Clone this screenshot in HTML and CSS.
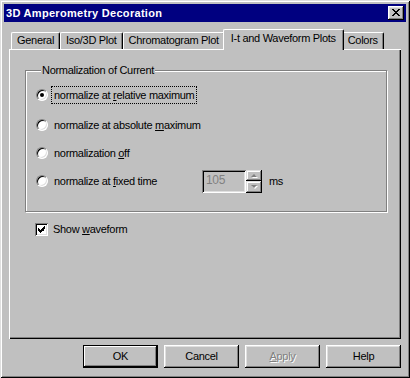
FILE: index.html
```html
<!DOCTYPE html>
<html lang="en">
<head>
    <meta charset="UTF-8">
    <title>3D Amperometry Decoration</title>
    <link rel="stylesheet" href="styles.css">
</head>
<body>
    <div class="window">
        <div class="titlebar">
            <span class="title">3D Amperometry Decoration</span>
            <span class="close-btn">
                <svg width="8" height="7" viewBox="0 0 8 7" shape-rendering="crispEdges">
                    <path d="M0 0h2v1h-2zM6 0h2v1h-2zM1 1h2v1h-2zM5 1h2v1h-2zM2 2h4v1h-4zM3 3h2v1h-2zM2 4h4v1h-4zM1 5h2v1h-2zM5 5h2v1h-2zM0 6h2v1h-2zM6 6h2v1h-2z" fill="#000"/>
                </svg>
            </span>
        </div>

        <div class="dialog-body">
            <div class="tabs">
                <div class="tab">General</div>
                <div class="tab">Iso/3D Plot</div>
                <div class="tab">Chromatogram Plot</div>
                <div class="tab active">I-t and Waveform Plots</div>
                <div class="tab">Colors</div>
            </div>

            <div class="panel">
                <fieldset class="group">
                    <legend>Normalization of Current</legend>
                    <div class="option">
                        <span class="radio checked"></span>
                        <span class="label focused">normalize at <u>r</u>elative maximum</span>
                    </div>
                    <div class="option">
                        <span class="radio"></span>
                        <span class="label">normalize at absolute <u>m</u>aximum</span>
                    </div>
                    <div class="option">
                        <span class="radio"></span>
                        <span class="label">normalization <u>o</u>ff</span>
                    </div>
                    <div class="option">
                        <span class="radio"></span>
                        <span class="label fixed-label">normalize at <u>f</u>ixed time</span>
                        <div class="spin-edit">
                            <div class="edit">105</div>
                            <div class="spinner">
                                <span class="spin-btn"><span class="arrow-up"></span></span>
                                <span class="spin-btn"><span class="arrow-down"></span></span>
                            </div>
                        </div>
                        <span class="unit">ms</span>
                    </div>
                </fieldset>

                <div class="check-row">
                    <span class="checkbox">
                        <svg width="7" height="7" viewBox="0 0 7 7" shape-rendering="crispEdges">
                            <path d="M6 0h1v3h-1zM5 1h1v4h-1zM4 2h1v3h-1zM0 2h1v3h-1zM1 3h1v3h-1zM3 3h1v3h-1zM2 4h1v3h-1z" fill="#000"/>
                        </svg>
                    </span>
                    <span class="label">Show <u>w</u>aveform</span>
                </div>
            </div>

            <div class="buttons">
                <div class="btn default">OK</div>
                <div class="btn">Cancel</div>
                <div class="btn disabled"><u>A</u>pply</div>
                <div class="btn">Help</div>
            </div>
        </div>
    </div>
</body>
</html>
```

FILE: styles.css
```css
body {
    margin: 0;
    background-color: #c0c0c0;
    font-family: "Liberation Sans", Arial, sans-serif;
    font-size: 11px;
    letter-spacing: -0.3px;
    color: #000;
}

/* Window frame */
.window {
    width: 410px;
    height: 378px;
    box-sizing: border-box;
    padding: 4px;
    background-color: #c0c0c0;
    box-shadow: inset 1px 1px #dfdfdf, inset -1px -1px #000,
                inset 2px 2px #fff, inset -2px -2px #808080;
    display: flex;
    flex-direction: column;
}

.titlebar {
    height: 18px;
    background-color: #000080;
    display: flex;
    align-items: center;
    justify-content: space-between;
    padding: 0 2px 0 2px;
}

.title {
    color: #fff;
    font-weight: bold;
    letter-spacing: 0.3px;
}

.close-btn {
    width: 16px;
    height: 14px;
    box-sizing: border-box;
    background-color: #c0c0c0;
    box-shadow: inset -1px -1px #000, inset 1px 1px #fff,
                inset -2px -2px #808080, inset 2px 2px #dfdfdf;
    display: flex;
    align-items: center;
    justify-content: center;
    padding: 0 1px 1px 0;
}

.close-btn svg {
    display: block;
}

.dialog-body {
    padding: 7px 5px 0 5px;
    display: flex;
    flex-direction: column;
}

/* Tabs */
.tabs {
    display: flex;
    align-items: flex-end;
    height: 20px;
    padding-left: 2px;
}

.tab {
    height: 16px;
    line-height: 15px;
    padding: 0 5px;
    border: 1px solid #fff;
    border-bottom: none;
    border-right-color: #000;
    border-radius: 2px 2px 0 0;
    box-shadow: inset -1px 0 #808080;
    white-space: nowrap;
}

.tab.active {
    height: 20px;
    line-height: 17px;
    margin: 0 -2px -1px -2px;
    padding: 0 7px;
    background-color: #c0c0c0;
    position: relative;
    z-index: 1;
}

/* Tab page */
.panel {
    height: 290px;
    box-sizing: border-box;
    padding: 15px 14px 0 16px;
    box-shadow: inset 1px 1px #fff, inset -1px -1px #000,
                inset -2px -2px #808080;
}

.group {
    margin: 0;
    padding: 4px 0 16px 10px;
    border: 1px solid #808080;
    box-shadow: inset 1px 1px #fff, 1px 1px #fff;
}

.group legend {
    padding: 0 1px;
    margin-left: 5px;
    background-color: #c0c0c0;
    line-height: 13px;
}

.option {
    display: flex;
    align-items: center;
    height: 28px;
}

.option:first-of-type {
    margin-bottom: 2px;
}

.radio {
    width: 12px;
    height: 12px;
    box-sizing: border-box;
    border-radius: 50%;
    background-color: #fff;
    border: 1px solid;
    border-color: #808080 #fff #fff #808080;
    box-shadow: inset 1px 1px #000, inset -1px -1px #dfdfdf;
    display: flex;
    align-items: center;
    justify-content: center;
    margin-right: 5px;
    flex-shrink: 0;
}

.radio.checked::after {
    content: "";
    width: 4px;
    height: 4px;
    border-radius: 50%;
    background-color: #000;
}

.label {
    line-height: 14px;
    padding: 0 1px;
}

.label.focused {
    outline: 1px dotted #000;
    outline-offset: 1px;
}

.fixed-label {
    width: 147px;
}

.spin-edit {
    display: flex;
    height: 23px;
}

.edit {
    width: 44px;
    box-sizing: border-box;
    padding: 3px 4px;
    color: #808080;
    font-size: 12px;
    line-height: 15px;
    background-color: #c0c0c0;
    box-shadow: inset 1px 1px #808080, inset -1px -1px #fff,
                inset 2px 2px #000, inset -2px -2px #dfdfdf;
}

.spinner {
    display: flex;
    flex-direction: column;
    width: 16px;
}

.spin-btn {
    height: 11px;
    flex: 1;
    background-color: #c0c0c0;
    box-shadow: inset -1px -1px #000, inset 1px 1px #dfdfdf,
                inset -2px -2px #808080, inset 2px 2px #fff;
    display: flex;
    align-items: center;
    justify-content: center;
}

.arrow-up,
.arrow-down {
    width: 0;
    height: 0;
    border-left: 3px solid transparent;
    border-right: 3px solid transparent;
    filter: drop-shadow(1px 1px 0 #fff);
}

.arrow-up {
    border-bottom: 3px solid #808080;
}

.arrow-down {
    border-top: 3px solid #808080;
}

.unit {
    margin-left: 7px;
}

/* Checkbox */
.check-row {
    display: flex;
    align-items: center;
    margin: 10px 0 0 10px;
    height: 14px;
}

.checkbox {
    width: 13px;
    height: 13px;
    box-sizing: border-box;
    background-color: #fff;
    box-shadow: inset 1px 1px #808080, inset -1px -1px #fff,
                inset 2px 2px #000, inset -2px -2px #dfdfdf;
    display: flex;
    align-items: center;
    justify-content: center;
    margin-right: 4px;
}

.checkbox svg {
    display: block;
}

/* Buttons */
.buttons {
    display: flex;
    justify-content: flex-end;
    gap: 6px;
    margin-top: 6px;
}

.btn {
    width: 75px;
    height: 23px;
    box-sizing: border-box;
    line-height: 23px;
    text-align: center;
    box-shadow: inset -1px -1px #000, inset 1px 1px #fff,
                inset -2px -2px #808080, inset 2px 2px #dfdfdf;
}

.btn.default {
    box-shadow: inset 0 0 0 1px #000, inset -2px -2px #000,
                inset 2px 2px #fff, inset -3px -3px #808080;
}

.btn.disabled {
    color: #808080;
    text-shadow: 1px 1px 0 #fff;
}
```
